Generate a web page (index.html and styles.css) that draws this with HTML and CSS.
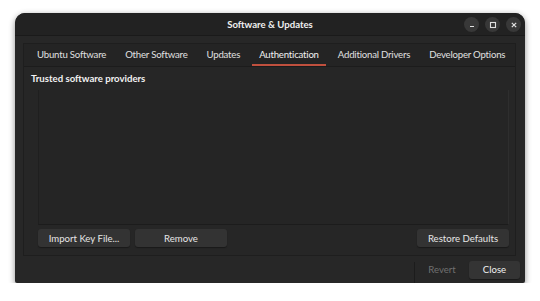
FILE: index.html
```html
<!DOCTYPE html>
<html lang="en">
<head>
    <meta charset="UTF-8">
    <meta name="viewport" content="width=device-width, initial-scale=1.0">
    <title>Software &amp; Updates</title>
    <link rel="stylesheet" href="styles.css">
</head>
<body>
    <div class="window">
        <div class="titlebar">
            <span class="title">Software &amp; Updates</span>
            <div class="controls">
                <span class="ctl">
                    <svg width="14" height="14" viewBox="0 0 14 14"><path d="M5 8.5h4" stroke="#e0e0e0" stroke-width="1.2"/></svg>
                </span>
                <span class="ctl">
                    <svg width="14" height="14" viewBox="0 0 14 14"><rect x="4.5" y="4.5" width="5" height="5" fill="none" stroke="#e0e0e0" stroke-width="1.1"/></svg>
                </span>
                <span class="ctl">
                    <svg width="14" height="14" viewBox="0 0 14 14"><path d="M4.8 4.8l4.4 4.4M9.2 4.8l-4.4 4.4" stroke="#e0e0e0" stroke-width="1.2"/></svg>
                </span>
            </div>
        </div>

        <div class="content">
            <div class="notebook">
                <div class="tabs">
                    <span class="tab">Ubuntu Software</span>
                    <span class="tab">Other Software</span>
                    <span class="tab">Updates</span>
                    <span class="tab active">Authentication</span>
                    <span class="tab">Additional Drivers</span>
                    <span class="tab">Developer Options</span>
                </div>
                <div class="page">
                    <div class="heading">Trusted software providers</div>
                    <div class="keys"></div>
                    <div class="key-buttons">
                        <button class="btn wide">Import Key File...</button>
                        <button class="btn wide">Remove</button>
                        <span class="spacer"></span>
                        <button class="btn wide">Restore Defaults</button>
                    </div>
                </div>
            </div>
        </div>

        <div class="actions">
            <span class="sep"></span>
            <button class="btn flat" disabled>Revert</button>
            <button class="btn close">Close</button>
        </div>
    </div>
</body>
</html>
```

FILE: styles.css
```css
body {
    margin: 0;
    background-color: #ffffff;
    font-family: Lato, "Noto Sans", sans-serif;
    font-size: 9.6px;
    color: #e6e6e6;
    white-space: nowrap;
}
.window {
    margin: 13px 0 0 15px;
    width: 510px;
    height: 270px;
    background-color: #272727;
    border-radius: 10px 10px 2px 2px;
    box-shadow: 0 2px 6px rgba(0, 0, 0, 0.45);
    display: flex;
    flex-direction: column;
    overflow: hidden;
}
.titlebar {
    height: 22px;
    flex: none;
    background-color: #222222;
    border-bottom: 1px solid #1a1a1a;
    position: relative;
    display: flex;
    align-items: center;
    justify-content: center;
}
.title {
    font-weight: bold;
    color: #f0f0f0;
}
.controls {
    position: absolute;
    right: 4px;
    top: 4px;
    display: flex;
    gap: 6px;
}
.ctl {
    width: 15px;
    height: 15px;
    border-radius: 50%;
    background-color: #383838;
    display: flex;
    align-items: center;
    justify-content: center;
}
.content {
    flex: 1;
    padding: 7px 9px 0 8px;
    display: flex;
    flex-direction: column;
}
.notebook {
    flex: 1;
    border: 1px solid #1e1e1e;
    background-color: #262626;
    display: flex;
    flex-direction: column;
}
.tabs {
    height: 22px;
    display: flex;
    align-items: stretch;
    padding-left: 6px;
    gap: 5px;
    border-bottom: 1px solid #1c1c1c;
    background-color: #242424;
}
.tab {
    flex: none;
    padding: 1px 7px 0;
    display: flex;
    align-items: center;
    color: #e0e0e0;
    letter-spacing: -0.2px;
    border-bottom: 2px solid transparent;
}
.tab.active {
    border-bottom-color: #c0503e;
    color: #f2f2f2;
}
.page {
    flex: 1;
    padding: 5px 6px 8px 7px;
    display: flex;
    flex-direction: column;
}
.heading {
    font-weight: bold;
    color: #f2f2f2;
    height: 13px;
    line-height: 13px;
}
.keys {
    flex: 1;
    margin: 5px 0 4px 7px;
    background-color: #252525;
    border-left: 1px solid #1f1f1f;
    border-bottom: 1px solid #1c1c1c;
    border-right: 1px solid #2e2e2e;
}
.key-buttons {
    display: flex;
    gap: 5px;
    padding-left: 7px;
}
.spacer {
    flex: 1;
}
.btn {
    font-family: inherit;
    font-size: 9.6px;
    color: #e6e6e6;
    background-color: #333333;
    border: none;
    border-radius: 3px;
    height: 18px;
    padding: 0 4px;
    white-space: nowrap;
    box-shadow: 0 1px 1px rgba(0, 0, 0, 0.35);
}
.btn.wide {
    width: 92px;
}
.actions {
    height: 27px;
    flex: none;
    display: flex;
    align-items: center;
    justify-content: flex-end;
    padding-right: 5px;
}
.sep {
    width: 1px;
    align-self: stretch;
    margin-top: 6px;
    background-color: #1c1c1c;
}
.btn.flat {
    background-color: transparent;
    box-shadow: none;
    color: #707070;
    width: 54px;
}
.btn.close {
    width: 51px;
    height: 18px;
    background-color: #343434;
    color: #f0f0f0;
}
```
